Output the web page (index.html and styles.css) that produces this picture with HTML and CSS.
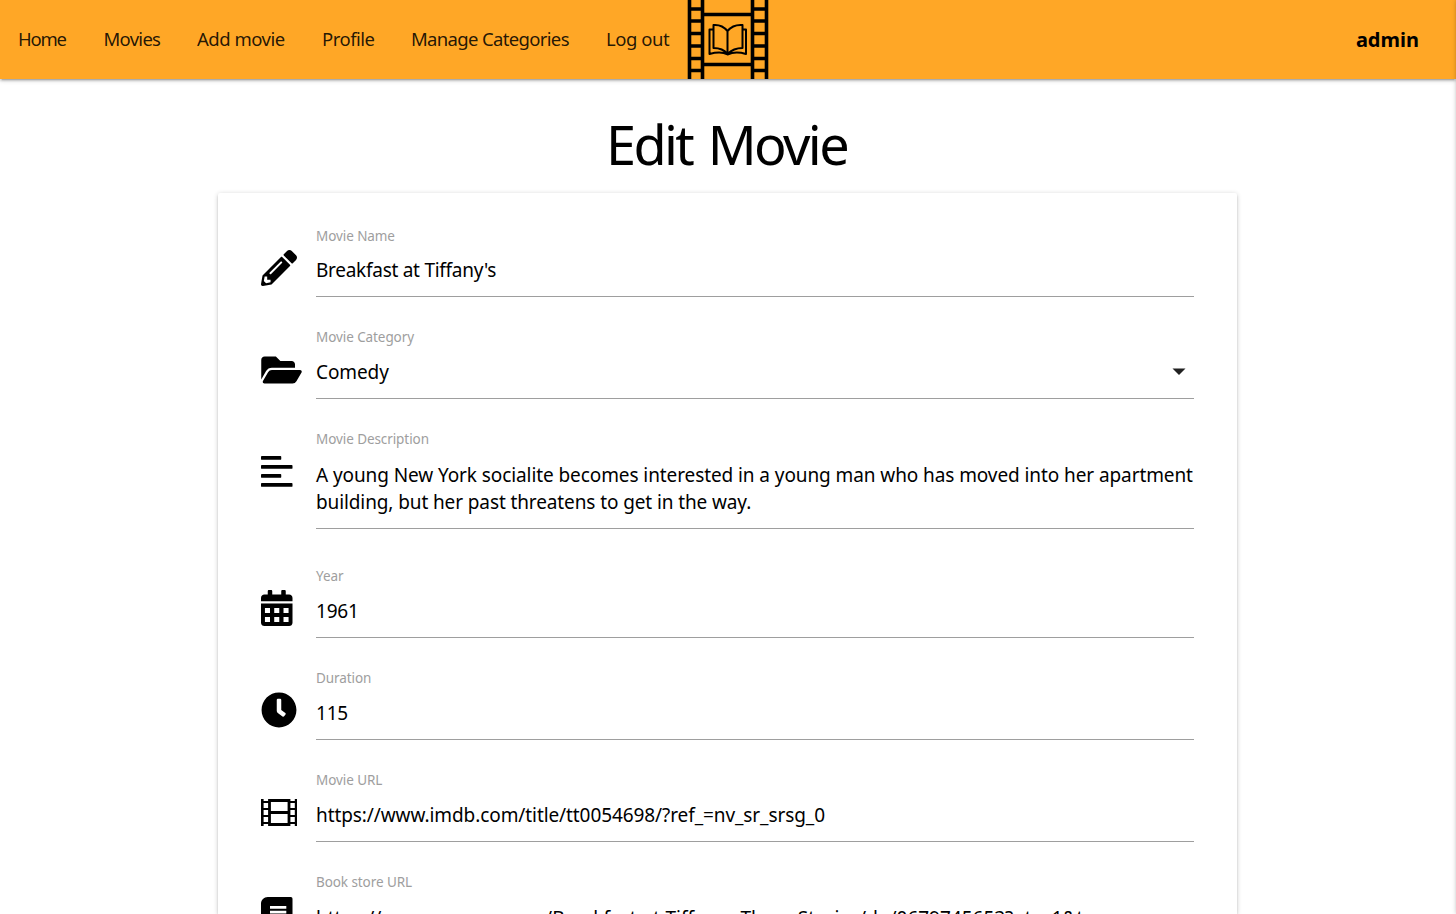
FILE: index.html
```html
<!DOCTYPE html>
<html lang="en">
<head>
<meta charset="utf-8">
<title>Edit Movie</title>
<link rel="stylesheet" href="styles.css">
</head>
<body>
<nav class="navbar">
  <ul class="nav-links">
    <li class="n-home"><a>Home</a></li>
    <li class="n-movies"><a>Movies</a></li>
    <li class="n-add"><a>Add movie</a></li>
    <li class="n-profile"><a>Profile</a></li>
    <li class="n-manage"><a>Manage Categories</a></li>
    <li class="n-logout"><a>Log out</a></li>
  </ul>
  <svg class="logo" viewBox="0 0 82 79" width="82" height="79">
    <path d="M2.500 0V79M15.500 0V79M65.500 0V79M79.500 0V79" fill="none" stroke="#000" stroke-width="3.6"/>
    <path d="M1 9H17M1 21H17M1 33.500H17M1 46H17M1 58.500H17M1 70.500H17M65 9H81M65 21H81M65 33.500H81M65 46H81M65 58.500H81M65 70.500H81M16 14.500H66M16 64.500H66" fill="none" stroke="#000" stroke-width="3.5"/>
    <path d="M40.500 31C36 25.500 32 24.500 26.500 25V48C33 48 37 49.500 40.500 54C45 49.500 49 48 55.500 48V25C50 24.500 45 25.500 40.500 31V54M26.500 29.500H22.500V54C30 52 36 52 40.500 54.500C46 52 52 52 59 54V29.500H55.500" fill="none" stroke="#000" stroke-width="2" stroke-linejoin="round"/>
  </svg>
  <b class="user">admin</b>
</nav>
<div class="drawer-edge"></div>
<main class="page">
  <h1>Edit Movie</h1>
  <form class="card">
    <div class="row first">
      <svg class="icon" viewBox="0 0 512 512"><path d="M497.900 142.100l-46.100 46.100c-4.700 4.700-12.300 4.700-17 0l-111-111c-4.700-4.700-4.700-12.300 0-17l46.100-46.100c18.700-18.700 49.100-18.700 67.900 0l60.100 60.100c18.800 18.700 18.800 49.100 0 67.900zM284.200 99.800L21.600 362.400.4 483.900c-2.900 16.400 11.400 30.600 27.800 27.800l121.500-21.300 262.600-262.600c4.700-4.700 4.700-12.300 0-17l-111-111c-4.800-4.700-12.400-4.700-17.100 0zM124.100 339.900c-5.500-5.500-5.500-14.300 0-19.800l154-154c5.500-5.500 14.300-5.500 19.800 0s5.500 14.300 0 19.800l-154 154c-5.500 5.500-14.300 5.500-19.800 0zM88 424h48v36.300l-64.500 11.300-31.100-31.100L51.700 376H88v48z"/></svg>
      <div class="field"><label>Movie Name</label><div class="value"><span class="v-name">Breakfast at Tiffany's</span></div></div>
    </div>
    <div class="row">
      <svg class="icon wide" viewBox="0 0 576 512"><path d="M572.700 292.100L500.300 416.200A64 64 0 0 1 445 448H45c-18.500 0-30.100-20.100-20.700-36.100l72.400-124.200A64 64 0 0 1 152 256h400c18.500 0 30 20.100 20.700 36.100zM152 224h328v-48c0-26.500-21.500-48-48-48H272l-64-64H48C21.500 64 0 85.500 0 112v278l69-118.400A96 96 0 0 1 152 224z"/></svg>
      <div class="field"><label>Movie Category</label><div class="value"><span class="v-cat">Comedy</span><svg class="caret" viewBox="0 0 14 7"><path d="M.5 .5H13.500L7 7Z" fill="#212121"/></svg></div></div>
    </div>
    <div class="row">
      <svg class="icon" viewBox="0 0 512 512"><path d="M12.800 27h262.400q12.800 0 12.800 12.800v30.400q0 12.800-12.800 12.800H12.800Q0 83 0 70.200V39.800Q0 27 12.800 27zM12 155h424q12 0 12 12v32q0 12-12 12H12q-12 0-12-12v-32q0-12 12-12zM12.800 283h262.400q12.800 0 12.800 12.800v30.400q0 12.800-12.800 12.800H12.800Q0 339 0 326.200v-30.400Q0 283 12.800 283zM12 411h424q12 0 12 12v32q0 12-12 12H12q-12 0-12-12v-32q0-12 12-12z"/></svg>
      <div class="field"><label>Movie Description</label><div class="value text"><span class="v-d1">A young New York socialite becomes interested in a young man who has moved into her apartment</span><br><span class="v-d2">building, but her past threatens to get in the way.</span></div></div>
    </div>
    <div class="row year">
      <svg class="icon up" viewBox="0 0 512 512"><path fill-rule="evenodd" d="M0 464c0 26.500 21.500 48 48 48h352c26.500 0 48-21.500 48-48V192H0zM320 256h72v72h-72zM320 384h72v72h-72zM188 256h72v72h-72zM188 384h72v72h-72zM56 256h72v72H56zM56 384h72v72H56zM400 64h-48V16c0-8.800-7.200-16-16-16h-32c-8.800 0-16 7.200-16 16v48H160V16c0-8.800-7.200-16-16-16h-32c-8.800 0-16 7.200-16 16v48H48C21.500 64 0 85.500 0 112v48h448v-48c0-26.500-21.500-48-48-48z"/></svg>
      <div class="field"><label>Year</label><div class="value"><span class="v-num">1961</span></div></div>
    </div>
    <div class="row">
      <svg class="icon up" viewBox="0 0 512 512"><path d="M256 8C119 8 8 119 8 256s111 248 248 248 248-111 248-248S393 8 256 8zm92.500 313l-20 25a16 16 0 0 1-22.500 2.500l-67-49.700a40 40 0 0 1-15-31.200V112a16 16 0 0 1 16-16h32a16 16 0 0 1 16 16v144l58 42.500a16 16 0 0 1 2.500 22.500z"/></svg>
      <div class="field"><label>Duration</label><div class="value"><span class="v-num">115</span></div></div>
    </div>
    <div class="row">
      <svg class="icon" viewBox="0 0 36 36"><path d="M1.200 4V31M8.500 4V31M28 4V31M35.200 4V31" fill="none" stroke="#000" stroke-width="2.800"/><path d="M8 5.500H28M8 17.500H28M8 29.500H28" fill="none" stroke="#000" stroke-width="3"/><path d="M1 7H9M1 14H9M1 21H9M1 28H9M27 7H35M27 14H35M27 21H35M27 28H35" fill="none" stroke="#000" stroke-width="2.200"/></svg>
      <div class="field"><label>Movie URL</label><div class="value"><span class="v-url">https://www.imdb.com/title/tt0054698/?ref_=nv_sr_srsg_0</span></div></div>
    </div>
    <div class="row last">
      <svg class="icon" viewBox="0 0 512 512"><path fill-rule="evenodd" d="M448 24v336q0 12-9 19c-5 17-5 52 0 69q9 4 9 14v26q0 24-24 24H96c-53 0-96-43-96-96V96C0 43 43 0 96 0h328q24 0 24 24zM128 128h232v38H128zM128 196h232v38H128z"/></svg>
      <div class="field"><label>Book store URL</label><div class="value"><span class="v-store">https://www.amazon.com/Breakfast-at-Tiffanys-Three-Stories/dp/0679745653?ots=1&amp;t</span></div></div>
    </div>
  </form>
</main>
</body>
</html>
```
FILE: styles.css
```css
html, body { margin: 0; height: 914px; overflow: hidden; background: #fff; }
body { font-family: "Noto Sans", sans-serif; color: #000; }
.navbar {
  height: 79px; display: flex; align-items: center; background: #ffa726;
  box-shadow: 0 2px 2px rgba(0,0,0,.14), 0 3px 1px -2px rgba(0,0,0,.12), 0 1px 5px rgba(0,0,0,.2);
  position: relative; font-size: 19px;
}
.nav-links { display: flex; list-style: none; margin: 0; padding: 0 0 2px; }
.nav-links li { padding: 0 19px 0 18px; white-space: nowrap; }
.nav-links a { font-size: 18.500px; color: rgba(0,0,0,.87); }
.n-home { width: 48.5px; letter-spacing: -1.200px; }
.n-movies { width: 56.5px; letter-spacing: -.72px; }
.n-add { width: 88px; letter-spacing: -.5px; }
.n-profile { width: 52px; letter-spacing: -.5px; }
.n-manage { width: 158px; letter-spacing: -.66px; }
.n-logout { width: 62.5px; letter-spacing: -.45px; }
.logo { display: block; margin-left: -1px; flex: none; }
.user { margin-left: auto; margin-right: 37px; font-size: 20px; line-height: 28px; }
.drawer-edge { position: absolute; left: 1457px; top: 0; width: 10px; height: 914px; box-shadow: 0 0 5px rgba(0,0,0,.35); }
.page { padding-top: 25px; }
h1 { margin: 0 3px 0 0; height: 89px; font-size: 54px; font-weight: 400; line-height: 80px; letter-spacing: -2.600px; word-spacing: 4px; text-align: center; }
.card {
  box-sizing: border-box; width: 1019px; height: 721px; margin: 0 0 0 218px; padding: 34px 43px 0;
  display: flex; flex-direction: column; gap: 31px; border-radius: 2px 2px 0 0; background: #fff;
  box-shadow: 0 2px 2px rgba(0,0,0,.14), 0 3px 1px -2px rgba(0,0,0,.12), 0 1px 5px rgba(0,0,0,.2);
}
.row { display: flex; flex: none; }
.row.year { margin-top: 7px; }
.icon { width: 36px; height: 36px; margin: 24px 19px 0 0; flex: none; }
.first .icon, .icon.up { margin-top: 23.4px; }
.icon.wide { width: 41px; margin-right: 14px; margin-top: 24.4px; }
.field { width: 878px; }
label { display: block; height: 18px; line-height: 18px; font-size: 13.500px; letter-spacing: -.08px; color: #9e9e9e; }
.value {
  box-sizing: border-box; height: 53px; padding-top: 13px; display: flex; justify-content: space-between;
  border-bottom: 1px solid #9e9e9e; font-size: 19px; line-height: 27px; white-space: nowrap;
}
.first .value { height: 52px; padding-top: 12px; }
.value.text { display: block; height: 81px; padding-top: 14px; }
.last .value { padding-top: 14px; }
.v-name { letter-spacing: -.27px; }
.v-cat { letter-spacing: -.1px; }
.v-d1 { letter-spacing: -.088px; }
.v-d2 { letter-spacing: -.11px; }
.v-num { letter-spacing: -.2px; }
.v-url { letter-spacing: -.09px; }
.v-store { letter-spacing: -.01px; }
.caret { width: 14px; height: 7px; margin: 9px 8px 0 0; }
```
